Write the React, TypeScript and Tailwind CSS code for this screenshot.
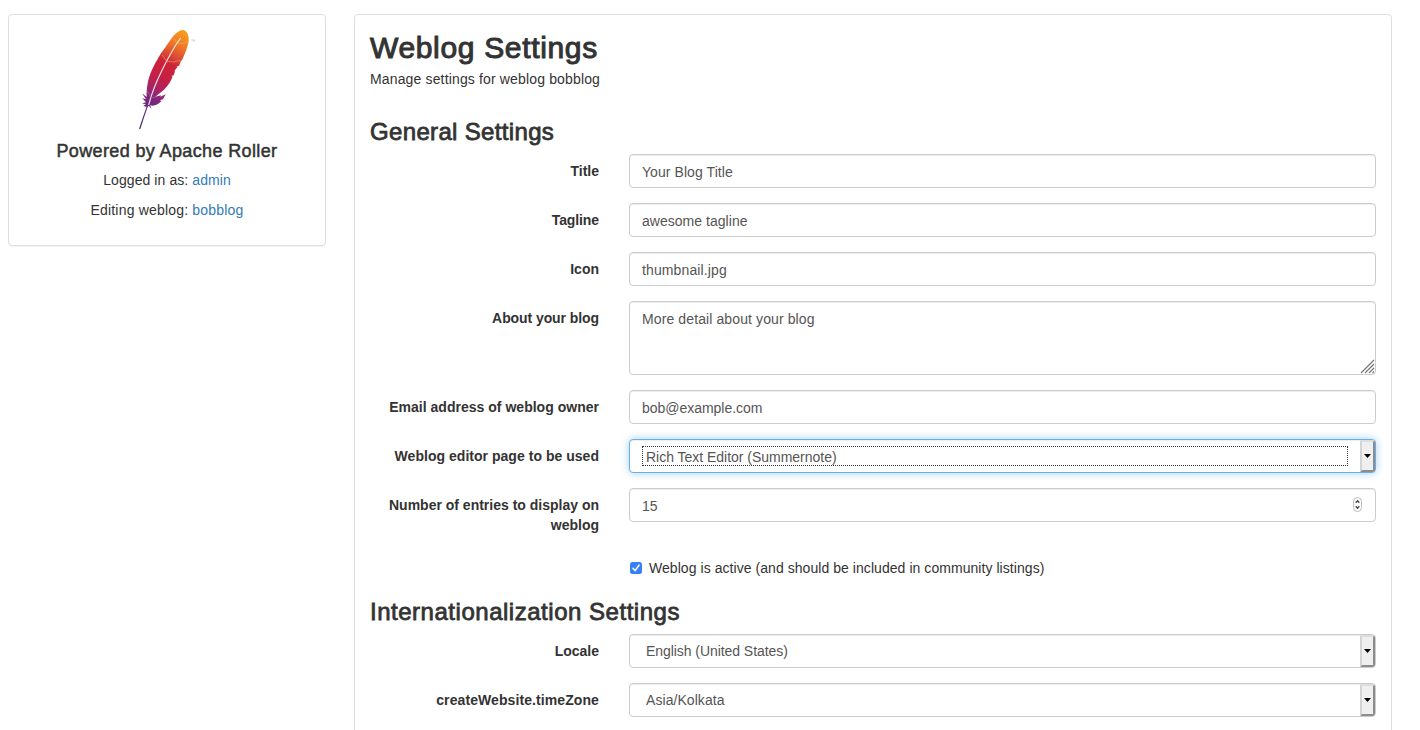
import type { ReactNode } from "react";

const medium = "[-webkit-text-stroke:0.8px_#333]";
const box =
  "flex w-full rounded-[4px] border border-[#ccc] bg-white text-[#555] shadow-[inset_0_1px_1px_rgba(0,0,0,0.075)]";

function Row({ label, tracking = "", children }: { label?: string; tracking?: string; children: ReactNode }) {
  return (
    <div className="mb-[15px] flex gap-[30px]">
      <div className="w-[229px] shrink-0 pt-[7px] text-right font-bold whitespace-nowrap">
        <span className={tracking}>{label}</span>
      </div>
      <div className="min-w-0 flex-1">{children}</div>
    </div>
  );
}

function TextField({ value, className }: { value: string; className: string }) {
  return (
    <div className={`${box} h-[34px] items-center px-3 pt-[2px]`}>
      <span className={className}>{value}</span>
    </div>
  );
}

function SelectField({ value, focused, className }: { value: string; focused?: boolean; className: string }) {
  return (
    <div
      className={
        focused
          ? "flex h-[34px] w-full rounded-[4px] border border-[#66afe9] bg-white text-[#555] shadow-[inset_0_1px_1px_rgba(0,0,0,0.075),0_0_8px_rgba(102,175,233,0.6)]"
          : `${box} h-[34px]`
      }
    >
      <div className="flex min-w-0 flex-1 items-center pr-3 pl-3">
        <div
          className={`flex h-[20px] w-full items-center border pl-[3px] ${
            focused ? "border-dotted border-[#333] pt-[2px]" : "border-transparent"
          }`}
        >
          <span className={className}>{value}</span>
        </div>
      </div>
      <div className="flex w-[15px] items-center justify-center rounded-r-[3px] border-2 border-t-[#ddd] border-r-[#8c8c8c] border-b-[#8c8c8c] border-l-[#d4d4d4] bg-[#efefef]">
        <svg width="7" height="4" viewBox="0 0 7 4" className="shrink-0">
          <path d="M0 0h7L3.5 4z" fill="#000" />
        </svg>
      </div>
    </div>
  );
}

function Feather() {
  return (
    <svg width="94" height="115" viewBox="0 0 282 345" className="mx-auto block">
      <defs>
        <linearGradient id="plume" gradientUnits="userSpaceOnUse" x1="193" y1="35" x2="82" y2="260">
          <stop offset="0" stopColor="#f99d1c" />
          <stop offset="0.17" stopColor="#ef7a27" />
          <stop offset="0.34" stopColor="#d94435" />
          <stop offset="0.42" stopColor="#cf2337" />
          <stop offset="0.62" stopColor="#c42045" />
          <stop offset="0.79" stopColor="#a3246a" />
          <stop offset="0.87" stopColor="#80297e" />
          <stop offset="1" stopColor="#6b267b" />
        </linearGradient>
        <linearGradient id="quill" gradientUnits="userSpaceOnUse" x1="82" y1="258" x2="59" y2="327">
          <stop offset="0" stopColor="#7b2980" />
          <stop offset="1" stopColor="#282662" />
        </linearGradient>
      </defs>
      <path
        fill="url(#plume)"
        d="M189 30C200 32 207 42 206 61C205 79 195 100 186 121L183 122L177 138L169 139L173 140L163 153L160 153L165 154L161 166L154 168L158 170C149 191 137 207 119 220L106 230L123 226L121 230L137 223L129 238L119 241L125 243C115 252 107 257 98 257L90 256L95 266L86 257L79 261L70 257L78 253L66 250L78 247L67 235L78 238L66 220L80 231C79 216 81 203 83 190C87 167 99 139 112 119C122 101 127 93 135 84C148 64 169 29 189 30Z"
      />
      <path d="M182 54C158 85 143 117 126 151C108 187 95 220 86 255" fill="none" stroke="#fff" strokeWidth="3.5" opacity="0.85" />
      <path d="M162 55L171 70Q188 72 204 66M127 105L140 124Q160 129 181 121" fill="none" stroke="#f4b37c" strokeWidth="2" opacity="0.75" />
      <path d="M81 212L94 233L108 231" fill="none" stroke="#c967a2" strokeWidth="2" opacity="0.8" />
      <path d="M83 256Q71 289 59 327" fill="none" stroke="url(#quill)" strokeWidth="3.5" />
      <path d="M214 59h4M216 59v6M220 65v-6l2 3l2-3v6" fill="none" stroke="#aaa" strokeWidth="1" />
    </svg>
  );
}

export default function App() {
  return (
    <div className="flex h-[730px] items-start gap-[28px] overflow-hidden bg-white pt-[14px] pr-[28px] pl-[8px] font-['Liberation_Sans',Arial,sans-serif] text-[14px] leading-[20px] text-[#333]">
      <aside className="h-[232px] w-[318px] shrink-0 rounded-[4px] border border-[#ddd] pt-[5px] text-center shadow-[0_1px_1px_rgba(0,0,0,0.05)]">
        <Feather />
        <h4 className={`mt-[6px] text-[18px] leading-[20px] tracking-[0.37px] [-webkit-text-stroke:0.5px_#333]`}>
          Powered by Apache Roller
        </h4>
        <p className="mt-[9px] tracking-[0.08px]">
          Logged in as: <a className="text-[#337ab7]">admin</a>
        </p>
        <p className="mt-[10px] tracking-[0.19px]">
          Editing weblog: <a className="text-[#337ab7]">bobblog</a>
        </p>
      </aside>

      <main className="h-[760px] min-w-0 flex-1 rounded-[4px] border border-[#ddd] px-[15px] pt-[16px] shadow-[0_1px_1px_rgba(0,0,0,0.05)]">
        <h1 className="text-[30px] leading-[33px] tracking-[0.66px] [-webkit-text-stroke:1px_#333]">
          Weblog Settings
        </h1>
        <p className="mt-[5px] tracking-[0.15px]">Manage settings for weblog bobblog</p>
        <h2 className={`mt-[30px] mb-[9px] text-[24px] leading-[26px] tracking-[0.34px] ${medium}`}>
          General Settings
        </h2>
        <Row label="Title">
          <TextField value="Your Blog Title" className="tracking-[0.07px]" />
        </Row>
        <Row label="Tagline" tracking="tracking-[-0.1px]">
          <TextField value="awesome tagline" className="tracking-[0.03px]" />
        </Row>
        <Row label="Icon">
          <TextField value="thumbnail.jpg" className="tracking-[0.12px]" />
        </Row>
        <Row label="About your blog" tracking="tracking-[-0.08px]">
          <div className={`${box} h-[74px] items-end justify-between pl-3`}>
            <span className="self-start pt-[7px] tracking-[0.11px]">More detail about your blog</span>
            <svg width="15" height="15" viewBox="0 0 15 15">
              <path d="M1 14L14 1M5 14L14 5M9 14L14 9M12.5 14L14 12.5" stroke="#777" strokeWidth="1.2" />
            </svg>
          </div>
        </Row>
        <Row label="Email address of weblog owner" tracking="tracking-[0.02px]">
          <TextField value="bob@example.com" className="tracking-[-0.03px]" />
        </Row>
        <Row label="Weblog editor page to be used" tracking="tracking-[0.03px]">
          <SelectField value="Rich Text Editor (Summernote)" focused className="tracking-[-0.02px]" />
        </Row>
        <div className="flex h-[64px] gap-[30px]">
          <div className="w-[229px] shrink-0 pt-[7px] text-right font-bold">
            Number of entries to display on weblog
          </div>
          <div className="min-w-0 flex-1">
            <div className={`${box} h-[34px] items-center justify-between pr-[13px] pl-3`}>
              <span className="pt-[2px]">15</span>
              <svg width="9" height="15" viewBox="0 0 9 15" className="mb-px">
                <rect x="0.5" y="0.5" width="8" height="14" rx="4" fill="#fff" stroke="#bbb" />
                <path d="M2.7 5.7L4.5 3.7L6.3 5.7M2.7 9.3L4.5 11.3L6.3 9.3" fill="none" stroke="#444" strokeWidth="1.3" />
              </svg>
            </div>
          </div>
        </div>
        <div className="mt-[6px] flex h-[20px] items-center pl-[260px]">
          <svg width="12" height="12" viewBox="0 0 12 12" className="mr-[7px]">
            <rect width="12" height="12" rx="2.5" fill="#3880f6" />
            <path d="M3 6.3L5.1 8.6L9 3.2" fill="none" stroke="#fff" strokeWidth="1.6" strokeLinecap="round" />
          </svg>
          <span className="tracking-[0.055px]">Weblog is active (and should be included in community listings)</span>
        </div>
        <h2 className={`mt-[21px] mb-[9px] text-[24px] leading-[26px] tracking-[0.52px] ${medium}`}>
          Internationalization Settings
        </h2>
        <Row label="Locale">
          <SelectField value="English (United States)" className="tracking-[-0.06px]" />
        </Row>
        <Row label="createWebsite.timeZone" tracking="tracking-[0.09px]">
          <SelectField value="Asia/Kolkata" className="tracking-[0.06px]" />
        </Row>
      </main>
    </div>
  );
}
